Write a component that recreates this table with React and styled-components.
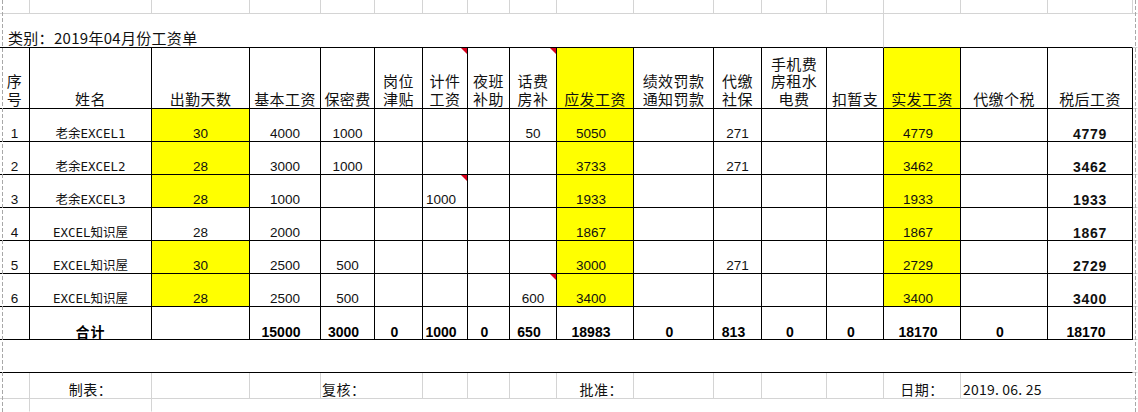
import React from 'react';
import styled, { createGlobalStyle } from 'styled-components';

const GREY = '#d4d4d4';
const BLACK = '#000';

const COLS = [
  { w: 30, head: ['序', '号'] },
  { w: 122, head: ['姓名'] },
  { w: 98, head: ['出勤天数'] },
  { w: 71, head: ['基本工资'] },
  { w: 54, head: ['保密费'] },
  { w: 48, head: ['岗位', '津贴'] },
  { w: 45, head: ['计件', '工资'], mark: true },
  { w: 42, head: ['夜班', '补助'] },
  { w: 47, head: ['话费', '房补'], mark: true },
  { w: 77, head: ['应发工资'], yellow: true, shift: 8 },
  { w: 80, head: ['绩效罚款', '通知罚款'] },
  { w: 48, head: ['代缴', '社保'] },
  { w: 65, head: ['手机费', '房租水', '电费'] },
  { w: 57, head: ['扣暂支'] },
  { w: 77, head: ['实发工资'], yellow: true, shift: 8 },
  { w: 87, head: ['代缴个税'] },
  { w: 85, head: ['税后工资'], strong: true },
];

const ROWS = [
  { no: '1', name: '老余EXCEL1', att: '30', attY: true, v: ['4000', '1000', '', '', '', '50', '5050', '', '271', '', '', '4779', '', '4779'] },
  { no: '2', name: '老余EXCEL2', att: '28', attY: true, v: ['3000', '1000', '', '', '', '', '3733', '', '271', '', '', '3462', '', '3462'] },
  { no: '3', name: '老余EXCEL3', att: '28', attY: true, v: ['1000', '', '', '1000', '', '', '1933', '', '', '', '', '1933', '', '1933'], marks: [6], shifts: { 6: 8 } },
  { no: '4', name: 'EXCEL知识屋', att: '28', attY: false, v: ['2000', '', '', '', '', '', '1867', '', '', '', '', '1867', '', '1867'] },
  { no: '5', name: 'EXCEL知识屋', att: '30', attY: true, v: ['2500', '500', '', '', '', '', '3000', '', '271', '', '', '2729', '', '2729'] },
  { no: '6', name: 'EXCEL知识屋', att: '28', attY: true, v: ['2500', '500', '', '', '', '600', '3400', '', '', '', '', '3400', '', '3400'], marks: [8] },
];

const TOTALS = ['15000', '3000', '0', '1000', '0', '650', '18983', '0', '813', '0', '0', '18170', '0', '18170'];

const TEMPLATE = COLS.map((c) => `${c.w}px`).join(' ') + ' 1fr';

const GlobalStyle = createGlobalStyle`
  html, body { margin: 0; padding: 0; background: #fff; }
  body {
    width: 1138px;
    height: 412px;
    overflow: hidden;
    font-family: "Noto Sans CJK SC", sans-serif;
    color: #111;
  }
`;

const Sheet = styled.div`
  position: relative;
  width: 1138px;
  height: 412px;
  display: flex;
  flex-direction: column;
  background: #fff;
  overflow: hidden;
`;

const Row = styled.div`
  display: grid;
  grid-template-columns: ${TEMPLATE};
  height: ${(p) => p.$h}px;
  flex: ${(p) => (p.$fill ? '1 1 auto' : 'none')};
`;

const Cell = styled.div`
  position: relative;
  box-sizing: border-box;
  min-width: 0;
  display: flex;
  align-items: flex-end;
  justify-content: ${(p) => (p.$align === 'left' ? 'flex-start' : p.$align === 'right' ? 'flex-end' : 'center')};
  grid-column: span ${(p) => p.$span || 1};
  border-right: 1px solid ${(p) => p.$right || 'transparent'};
  border-bottom: 1px solid ${(p) => p.$bottom || 'transparent'};
  background: ${(p) => (p.$yellow ? '#ffff00' : '#fff')};
  white-space: nowrap;
`;

const GridCell = styled(Cell)``;

const TitleCell = styled(Cell)`
  padding: 0 0 1px 8px;
  font-size: 15px;
  line-height: 17.5px;
  letter-spacing: 0.3px;
`;

const HeadCell = styled(Cell)`
  padding-bottom: 1px;
  font-size: 15px;
  line-height: 17.5px;
  letter-spacing: 0.4px;
  text-align: center;
`;

const HeadText = styled.span`
  display: block;
`;

const DataCell = styled(Cell)`
  padding-right: ${(p) => p.$shift || 0}px;
  font-family: "Liberation Sans", Arial, sans-serif;
  font-size: ${(p) => (p.$strong ? 14 : 13.5)}px;
  font-weight: ${(p) => (p.$strong ? 700 : 400)};
  letter-spacing: ${(p) => (p.$strong ? 0.7 : 0)}px;
  line-height: 14px;
  color: #111;
`;

const NameCell = styled(Cell)`
  font-family: "DejaVu Sans Mono", "Noto Sans CJK SC", monospace;
  font-size: 12.5px;
  line-height: 14px;
  padding-bottom: 0;
`;

const TotalCell = styled(Cell)`
  padding-right: 8px;
  font-family: "Liberation Sans", Arial, "Noto Sans CJK SC", sans-serif;
  font-size: 14px;
  font-weight: 700;
  line-height: 14px;
  color: #000;
`;

const TotalLabel = styled(Cell)`
  font-family: "Noto Sans CJK SC", sans-serif;
  font-size: 14px;
  font-weight: 700;
  line-height: 16px;
  letter-spacing: 1px;
  color: #000;
`;

const FooterCell = styled(Cell)`
  padding: 0 ${(p) => p.$pr || 0}px 1px ${(p) => p.$pl || 0}px;
  font-size: 14px;
  line-height: 16px;
  letter-spacing: 0.5px;
`;

const DateText = styled.span`
  font-family: "Noto Sans CJK SC", sans-serif;
  font-size: 14px;
  letter-spacing: 0.2px;
`;

const CommentMark = styled.span`
  position: absolute;
  top: 0;
  right: 0;
  width: 0;
  height: 0;
  border-top: 6px solid #d8001c;
  border-left: 6px solid transparent;
`;

const PageBreak = styled.div`
  position: absolute;
  top: 0;
  bottom: 0;
  left: ${(p) => p.$x}px;
  width: 1px;
  background: repeating-linear-gradient(to bottom, #a8a8a8 0 4px, transparent 4px 6px);
  pointer-events: none;
`;

function GridRow({ h, fill, lines }) {
  return (
    <Row $h={h} $fill={fill}>
      {COLS.map((c, i) => (
        <GridCell key={i} $right={lines(i) ? GREY : undefined} $bottom={fill ? undefined : GREY} />
      ))}
      <GridCell $bottom={fill ? undefined : GREY} />
    </Row>
  );
}

export default function App() {
  return (
    <>
      <GlobalStyle />
      <Sheet>
        <GridRow h={14} lines={() => true} />

        <Row $h={34}>
          <TitleCell $span={14} $align="left" $right={GREY} $bottom={BLACK}>
            类别：2019年04月份工资单
          </TitleCell>
          <GridCell $span={3} $bottom={BLACK} />
          <GridCell $bottom={GREY} />
        </Row>

        <Row $h={61}>
          {COLS.map((c, i) => (
            <HeadCell key={i} $right={BLACK} $bottom={BLACK} $yellow={c.yellow}>
              <HeadText>
                {c.head.map((l, j) => (
                  <React.Fragment key={j}>
                    {j > 0 && <br />}
                    {l}
                  </React.Fragment>
                ))}
              </HeadText>
              {c.mark && <CommentMark />}
            </HeadCell>
          ))}
          <GridCell $bottom={GREY} />
        </Row>

        {ROWS.map((r, ri) => (
          <Row $h={33} key={ri}>
            <DataCell $right={BLACK} $bottom={BLACK}>{r.no}</DataCell>
            <NameCell $right={BLACK} $bottom={BLACK}>{r.name}</NameCell>
            <DataCell $right={BLACK} $bottom={BLACK} $yellow={r.attY}>{r.att}</DataCell>
            {r.v.map((val, vi) => {
              const ci = vi + 3;
              const c = COLS[ci];
              const shift = (r.shifts && r.shifts[ci]) || c.shift;
              return (
                <DataCell
                  key={vi}
                  $right={BLACK}
                  $bottom={BLACK}
                  $yellow={c.yellow}
                  $strong={c.strong}
                  $shift={shift}
                >
                  {val}
                  {r.marks && r.marks.includes(ci) && <CommentMark />}
                </DataCell>
              );
            })}
            <GridCell $bottom={GREY} />
          </Row>
        ))}

        <Row $h={33}>
          <TotalCell $right={BLACK} $bottom={BLACK} />
          <TotalLabel $right={BLACK} $bottom={BLACK}>合计</TotalLabel>
          <TotalCell $right={BLACK} $bottom={BLACK} />
          {TOTALS.map((t, i) => (
            <TotalCell key={i} $right={BLACK} $bottom={BLACK}>{t}</TotalCell>
          ))}
          <GridCell $bottom={GREY} />
        </Row>

        <Row $h={33}>
          <GridCell $span={17} $bottom={BLACK} />
          <GridCell $bottom={GREY} />
        </Row>

        <Row $h={26}>
          <FooterCell $right={GREY} $bottom={GREY} />
          <FooterCell $right={GREY} $bottom={GREY}>制表：</FooterCell>
          <FooterCell $right={GREY} $bottom={GREY} />
          <FooterCell $right={GREY} $bottom={GREY} />
          <FooterCell $span={2} $align="left" $pl={1} $right={GREY} $bottom={GREY}>复核：</FooterCell>
          <FooterCell $right={GREY} $bottom={GREY} />
          <FooterCell $right={GREY} $bottom={GREY} />
          <FooterCell $right={GREY} $bottom={GREY} />
          <FooterCell $right={GREY} $bottom={GREY} $align="right" $pr={10}>批准：</FooterCell>
          <FooterCell $right={GREY} $bottom={GREY} />
          <FooterCell $right={GREY} $bottom={GREY} />
          <FooterCell $right={GREY} $bottom={GREY} />
          <FooterCell $right={GREY} $bottom={GREY} />
          <FooterCell $right={GREY} $bottom={GREY}>日期：</FooterCell>
          <FooterCell $span={2} $align="left" $pl={2} $bottom={GREY}>
            <DateText>2019. 06. 25</DateText>
          </FooterCell>
          <GridCell $bottom={GREY} />
        </Row>

        <GridRow h={14} fill lines={(i) => i < 2} />

        <PageBreak $x={2} />
        <PageBreak $x={1135} />
      </Sheet>
    </>
  );
}
